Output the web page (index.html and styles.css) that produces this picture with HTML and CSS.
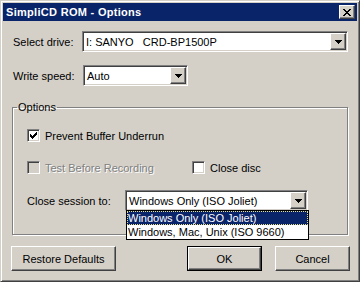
FILE: index.html
```html
<!DOCTYPE html>
<html lang="en">
<head>
    <meta charset="UTF-8">
    <title>SimpliCD ROM - Options</title>
    <link rel="stylesheet" href="styles.css">
</head>
<body>
    <div class="window">
        <div class="titlebar">
            <span class="title">SimpliCD ROM - Options</span>
            <div class="close raised">
                <svg width="8" height="7" viewBox="0 0 8 7" shape-rendering="crispEdges">
                    <path d="M0 0h2v1H0zM6 0h2v1H6zM1 1h2v1H1zM5 1h2v1H5zM2 2h4v1H2zM3 3h2v1H3zM2 4h4v1H2zM1 5h2v1H1zM5 5h2v1H5zM0 6h2v1H0zM6 6h2v1H6z" fill="#000"/>
                </svg>
            </div>
        </div>

        <div class="content">
            <div class="row drive-row">
                <label class="label drive-label">Select drive:</label>
                <div class="combo sunken drive-combo">
                    <span class="value">I: SANYO   CRD-BP1500P</span>
                    <span class="arrow raised">
                        <svg width="7" height="4" viewBox="0 0 7 4" shape-rendering="crispEdges"><path d="M0 0h7v1H0zM1 1h5v1H1zM2 2h3v1H2zM3 3h1v1H3z" fill="#000"/></svg>
                    </span>
                </div>
            </div>

            <div class="row speed-row">
                <label class="label speed-label">Write speed:</label>
                <div class="combo sunken speed-combo">
                    <span class="value">Auto</span>
                    <span class="arrow raised">
                        <svg width="7" height="4" viewBox="0 0 7 4" shape-rendering="crispEdges"><path d="M0 0h7v1H0zM1 1h5v1H1zM2 2h3v1H2zM3 3h1v1H3z" fill="#000"/></svg>
                    </span>
                </div>
            </div>

            <fieldset class="group">
                <legend>Options</legend>

                <div class="check-row">
                    <span class="check sunken">
                        <svg width="7" height="7" viewBox="0 0 7 7" shape-rendering="crispEdges"><path d="M0 2h1v3H0zM1 3h1v3H1zM2 4h1v3H2zM3 3h1v3H3zM4 2h1v3H4zM5 1h1v3H5zM6 0h1v3H6z" fill="#000"/></svg>
                    </span>
                    <span>Prevent Buffer Underrun</span>
                </div>

                <div class="check-pair">
                    <div class="check-row disabled test-item">
                        <span class="check sunken"></span>
                        <span>Test Before Recording</span>
                    </div>
                    <div class="check-row">
                        <span class="check sunken"></span>
                        <span>Close disc</span>
                    </div>
                </div>

                <div class="row session-row">
                    <label class="label session-label">Close session to:</label>
                    <div class="combo sunken session-combo">
                        <span class="value">Windows Only (ISO Joliet)</span>
                        <span class="arrow raised">
                            <svg width="7" height="4" viewBox="0 0 7 4" shape-rendering="crispEdges"><path d="M0 0h7v1H0zM1 1h5v1H1zM2 2h3v1H2zM3 3h1v1H3z" fill="#000"/></svg>
                        </span>
                        <ul class="droplist">
                            <li class="selected">Windows Only (ISO Joliet)</li>
                            <li>Windows, Mac, Unix (ISO 9660)</li>
                        </ul>
                    </div>
                </div>
            </fieldset>

            <div class="buttons">
                <div class="btn raised restore">Restore Defaults</div>
                <div class="spacer"></div>
                <div class="btn default"><div class="raised inner">OK</div></div>
                <div class="btn raised cancel">Cancel</div>
            </div>
        </div>
    </div>
</body>
</html>
```

FILE: styles.css
```css
body {
    margin: 0;
    background-color: #d4d0c8;
    font-family: "Liberation Sans", Arial, sans-serif;
    font-size: 11px;
    color: #000;
}
.window {
    width: 360px;
    height: 282px;
    box-sizing: border-box;
    padding: 2px;
    border: 1px solid;
    border-color: #d4d0c8 #404040 #404040 #d4d0c8;
    box-shadow: inset 1px 1px #fff, inset -1px -1px #808080;
    background-color: #d4d0c8;
    display: flex;
    flex-direction: column;
}
.raised {
    box-sizing: border-box;
    border: 1px solid;
    border-color: #fff #404040 #404040 #fff;
    box-shadow: inset -1px -1px #808080, inset 1px 1px #d4d0c8;
    background-color: #d4d0c8;
}
.sunken {
    box-sizing: border-box;
    border: 1px solid;
    border-color: #808080 #fff #fff #808080;
    box-shadow: inset 1px 1px #404040, inset -1px -1px #d4d0c8;
    background-color: #fff;
}
.titlebar {
    height: 18px;
    background-color: #0a246a;
    display: flex;
    align-items: center;
    justify-content: space-between;
    padding: 0 2px 0 3px;
}
.title {
    color: #fff;
    font-weight: bold;
    font-size: 11px;
    letter-spacing: 0.3px;
}
.close {
    width: 16px;
    height: 14px;
    display: flex;
    align-items: center;
    justify-content: center;
}
.content {
    padding: 0 7px 0 8px;
}
.row {
    display: flex;
    align-items: center;
}
.label {
    padding-left: 2px;
    box-sizing: border-box;
}
.drive-row {
    margin-top: 10px;
}
.drive-label {
    width: 71px;
}
.speed-row {
    margin-top: 13px;
}
.speed-label {
    width: 72px;
}
.combo {
    position: relative;
    height: 21px;
    padding: 1px;
    display: flex;
    align-items: center;
}
.combo .value {
    flex: 1;
    padding-left: 2px;
    white-space: pre;
}
.arrow {
    width: 16px;
    height: 17px;
    display: flex;
    align-items: center;
    justify-content: center;
}
.drive-combo {
    width: 266px;
}
.speed-combo {
    width: 105px;
}
.group {
    margin: 15px 0 0 1px;
    width: 336px;
    box-sizing: border-box;
    padding: 15px 0 23px 14px;
    border: 1px solid #808080;
    box-shadow: inset 1px 1px #fff, 1px 1px #fff;
}
.group legend {
    margin-left: -10px;
    padding: 0 1px;
    line-height: 13px;
}
.check-row {
    display: flex;
    align-items: center;
    height: 13px;
}
.check {
    width: 13px;
    height: 13px;
    margin-right: 5px;
    display: flex;
    align-items: center;
    justify-content: center;
}
.disabled {
    color: #808080;
    text-shadow: 1px 1px #fff;
}
.disabled .check {
    background-color: #d4d0c8;
}
.check-pair {
    display: flex;
    margin-top: 19px;
}
.test-item {
    width: 165px;
}
.session-row {
    margin-top: 16px;
}
.session-label {
    width: 98px;
    padding-left: 0;
}
.session-combo {
    width: 183px;
}
.droplist {
    position: absolute;
    top: 100%;
    left: 0;
    width: 183px;
    box-sizing: border-box;
    margin: 0;
    padding: 0;
    list-style: none;
    border: 1px solid #000;
    background-color: #fff;
    z-index: 2;
}
.droplist li {
    height: 14px;
    line-height: 14px;
    padding-left: 1px;
}
.droplist .selected {
    background-color: #0a246a;
    color: #fff;
    outline: 1px dotted #e8e088;
    outline-offset: -1px;
}
.buttons {
    display: flex;
    margin-top: 11px;
}
.spacer {
    flex: 1;
}
.btn {
    height: 25px;
    display: flex;
    align-items: center;
    justify-content: center;
    box-sizing: border-box;
}
.restore {
    width: 105px;
}
.default {
    width: 75px;
    border: 1px solid #000;
    margin-right: 13px;
}
.default .inner {
    width: 100%;
    height: 100%;
    display: flex;
    align-items: center;
    justify-content: center;
}
.cancel {
    width: 75px;
}
```
